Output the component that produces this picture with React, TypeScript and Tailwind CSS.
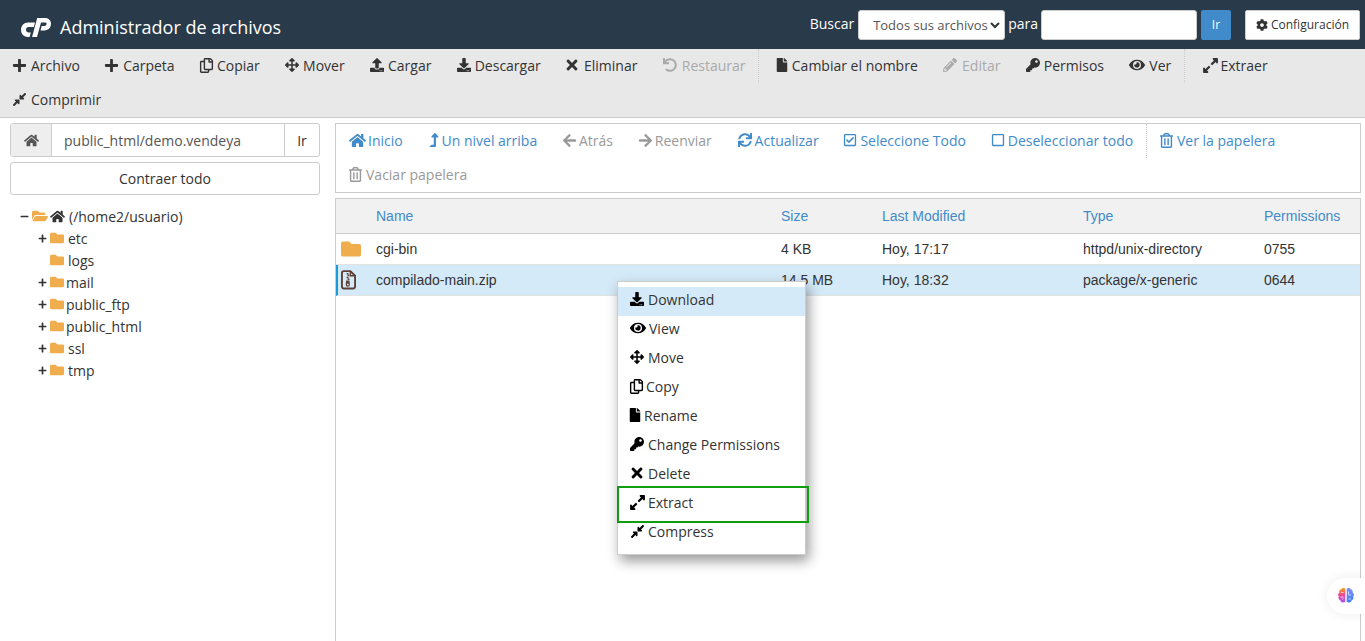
import React from "react";
import {
  FaPlus, FaRegCopy, FaArrowsAlt, FaUpload, FaDownload, FaTimes, FaUndo, FaFile, FaPencilAlt, FaKey, FaEye,
  FaExpandAlt, FaCompressAlt, FaHome, FaLevelUpAlt, FaArrowLeft, FaArrowRight, FaSync, FaRegCheckSquare,
  FaRegSquare, FaRegTrashAlt, FaCog, FaFolder, FaFolderOpen, FaMinus,
} from "react-icons/fa";

const sans = "font-['Open_Sans',sans-serif]";

function Logo() {
  return (
    <svg width="30" height="19" viewBox="0 0 30 19" className="shrink-0">
      <path fill="#fff" d="M14 4.500L12.800 9H7.800C6 9 5 10.200 5 11.800C5 13.400 6 14.600 7.800 14.600H9.800L8.600 19H7C3 19 0 16 0 11.800C0 7.600 3 4.500 7 4.500Z" />
      <path fill="#fff" d="M16.200 0H24C27.800 0 30 2.500 30 5.600C30 9.500 27.500 12.500 23.500 12.500H19.500L20.700 8H23.500C24.800 8 25.600 7 25.600 5.800C25.600 4.900 25 4.400 24 4.400H20L16 19H11.100Z" />
    </svg>
  );
}

function Brain() {
  return (
    <svg width="20" height="20" viewBox="0 0 20 20">
      <defs>
        <linearGradient id="brainL" x1="0" y1="0" x2="0" y2="1">
          <stop offset="0" stopColor="#f59e0b" />
          <stop offset="0.5" stopColor="#ec4899" />
          <stop offset="1" stopColor="#a855f7" />
        </linearGradient>
        <linearGradient id="brainR" x1="0" y1="0" x2="0" y2="1">
          <stop offset="0" stopColor="#818cf8" />
          <stop offset="1" stopColor="#3b82f6" />
        </linearGradient>
      </defs>
      <path fill="url(#brainL)" d="M9.300 2.500C8 1.500 6 1.800 5.400 3.300 3.800 3.500 3 5 3.400 6.400 2 7.300 1.600 9.300 2.800 10.500 2 12 2.700 14 4.400 14.400c.3 1.800 3 2.900 4.900 1.300z" />
      <path fill="url(#brainR)" d="M10.700 2.500c1.300-1 3.300-.7 3.900.8 1.600.2 2.400 1.700 2 3.100 1.400.9 1.800 2.900.6 4.100.8 1.500.1 3.500-1.600 3.900-.3 1.800-3 2.900-4.900 1.300z" />
      <g stroke="#fff" strokeWidth="0.7" fill="none">
        <path d="M5 6.500h2.500M4.500 11h3M6 13.500l1.500-1M12.500 5.500v3M15 9h-2.500M12.500 13h2.500" />
      </g>
    </svg>
  );
}

function ZipIcon() {
  return (
    <svg width="15" height="20" viewBox="0 0 16 21">
      <path fill="none" stroke="#5d4037" strokeWidth="2" strokeLinejoin="round" d="M3 1h7l5 5v11.500a2 2 0 0 1-2 2H3a2 2 0 0 1-2-2V3a2 2 0 0 1 2-2z" />
      <path fill="none" stroke="#5d4037" strokeWidth="1.500" d="M10 1v5h5" />
      <path fill="#5d4037" d="M6 3h2v1.500H6zM7 5h2v1.500H7zM6 7h2v1.500H6zM7 9h2v1.500H7zM5.500 11h3.500l.5 4.500a1.900 1.900 0 0 1-4.500 0z" />
      <circle cx="7.300" cy="15.300" r="0.9" fill="#fff" />
    </svg>
  );
}

type Tool = { icon: React.ReactNode; label: string; box: string; disabled?: boolean; sep?: boolean };

const tools: Tool[] = [
  { icon: <FaPlus size={15} />, label: "Archivo", box: "-ml-[1px] w-[19px]" },
  { icon: <FaPlus size={15} />, label: "Carpeta", box: "-ml-[1px] w-[19px]" },
  { icon: <FaRegCopy size={15} />, label: "Copiar", box: "-ml-[1px] w-[18px]" },
  { icon: <FaArrowsAlt size={14} />, label: "Mover", box: "w-[18px]" },
  { icon: <FaUpload size={14} />, label: "Cargar", box: "w-[18px]" },
  { icon: <FaDownload size={14} />, label: "Descargar", box: "w-[18px]" },
  { icon: <FaTimes size={16} />, label: "Eliminar", box: "-ml-[2px] w-[20px]" },
  { icon: <FaUndo size={14} />, label: "Restaurar", box: "w-[19px]", disabled: true, sep: true },
  { icon: <FaFile size={14} />, label: "Cambiar el nombre", box: "-ml-[2px] w-[17px]" },
  { icon: <FaPencilAlt size={14} />, label: "Editar", box: "w-[19px]", disabled: true },
  { icon: <FaKey size={14} />, label: "Permisos", box: "w-[18px]" },
  { icon: <FaEye size={16} />, label: "Ver", box: "w-[20px]", sep: true },
  { icon: <FaExpandAlt size={17} />, label: "Extraer", box: "-ml-[1px] w-[19px]" },
  { icon: <FaCompressAlt size={15} />, label: "Comprimir", box: "-ml-[1px] w-[19px]" },
];

type Nav = { icon: React.ReactNode; label: string; box: string; muted?: boolean; sep?: boolean };

const navs: Nav[] = [
  { icon: <FaHome size={17} />, label: "Inicio", box: "w-[19px]" },
  { icon: <FaLevelUpAlt size={14} />, label: "Un nivel arriba", box: "-ml-[2px] w-[15px]" },
  { icon: <FaArrowLeft size={15} />, label: "Atrás", box: "-ml-[1px] w-[17px]", muted: true },
  { icon: <FaArrowRight size={15} />, label: "Reenviar", box: "-ml-[1px] w-[17px]", muted: true },
  { icon: <FaSync size={14} />, label: "Actualizar", box: "w-[17px]" },
  { icon: <FaRegCheckSquare size={14} />, label: "Seleccione Todo", box: "-ml-[1px] w-[17px]" },
  { icon: <FaRegSquare size={14} />, label: "Deseleccionar todo", box: "-ml-[1px] w-[17px]", sep: true },
  { icon: <FaRegTrashAlt size={15} />, label: "Ver la papelera", box: "-ml-[1px] w-[18px]" },
  { icon: <FaRegTrashAlt size={15} />, label: "Vaciar papelera", box: "-ml-[1px] w-[18px]", muted: true },
];

const tree = [
  { label: "etc", plus: true, gap: "ml-[4px]" },
  { label: "logs", plus: false, gap: "ml-[4px]" },
  { label: "mail", plus: true, gap: "ml-[2px]" },
  { label: "public_ftp", plus: true, gap: "ml-[2px]" },
  { label: "public_html", plus: true, gap: "ml-[2px]" },
  { label: "ssl", plus: true, gap: "ml-[4px]" },
  { label: "tmp", plus: true, gap: "ml-[4px]" },
];

const menu: { icon: React.ReactNode; label: string; active?: boolean; box: string }[] = [
  { icon: <FaDownload size={14} />, label: "Download", active: true, box: "w-[18px]" },
  { icon: <FaEye size={16} />, label: "View", box: "w-[19px]" },
  { icon: <FaArrowsAlt size={14} />, label: "Move", box: "w-[18px]" },
  { icon: <FaRegCopy size={15} />, label: "Copy", box: "-ml-[1px] w-[17px]" },
  { icon: <FaFile size={14} />, label: "Rename", box: "-ml-[2px] w-[16px]" },
  { icon: <FaKey size={14} />, label: "Change Permissions", box: "w-[18px]" },
  { icon: <FaTimes size={16} />, label: "Delete", box: "-ml-[1px] w-[19px]" },
  { icon: <FaExpandAlt size={17} />, label: "Extract", box: "-ml-[1px] w-[19px]" },
  { icon: <FaCompressAlt size={15} />, label: "Compress", box: "w-[18px]" },
];

function Row({ icon, name, size, date, type, perm, selected }: { icon: React.ReactNode; name: string; size: string; date: string; type: string; perm: string; selected?: boolean }) {
  return (
    <div className={`flex h-[31px] items-center border-b border-[#e3e3e3] text-[14px] text-[#333] ${selected ? "bg-[#d5eaf8] border-l-[2px] border-l-[#1a9ad8] pl-[3px]" : "pl-[5px]"}`}>
      <div className="flex w-[35px] justify-start">{icon}</div>
      <div className="w-[405px]">{name}</div>
      <div className="w-[101px]">{size}</div>
      <div className="w-[201px]">{date}</div>
      <div className="w-[181px]">{type}</div>
      <div>{perm}</div>
    </div>
  );
}

export default function App() {
  return (
    <div className={`relative h-[641px] w-[1365px] overflow-hidden bg-white ${sans} text-[14px] text-[#333]`}>
      <header className="flex h-[49px] items-center bg-[#293a4a] pl-[21px] pr-[5px]">
        <div className="mt-[5px] flex items-center">
          <Logo />
          <h1 className="ml-[9px] text-[18px] text-white">Administrador de archivos</h1>
        </div>
        <div className="ml-auto flex items-center">
          <span className="pb-[2px] text-white">Buscar</span>
          <div className="relative ml-[4px]">
            <select className="h-[30px] w-[147px] appearance-none rounded-[3px] border border-[#ccc] bg-white pl-[14px] pt-[2px] text-[13px] text-[#555]">
              <option>Todos sus archivos</option>
            </select>
            <svg width="10" height="7" viewBox="0 0 10 7" className="pointer-events-none absolute right-[5px] top-[12px]">
              <path d="M1 1l4 4 4-4" fill="none" stroke="#333" strokeWidth="2" />
            </svg>
          </div>
          <span className="ml-[3px] pb-[2px] text-white">para</span>
          <input className="ml-[3px] h-[30px] w-[156px] rounded-[3px] border border-[#ccc] bg-white" />
          <button className="ml-[4px] h-[30px] w-[30px] rounded-[2px] bg-[#428bca] pt-[1px] text-[12px] text-white">Ir</button>
          <button className="ml-[14px] flex h-[30px] w-[115px] items-center justify-center gap-[3px] rounded-[2px] border border-[#ccc] bg-white pt-[1px] text-[12px] text-[#333]">
            <FaCog size={12} />
            Configuración
          </button>
        </div>
      </header>

      <nav className="flex h-[69px] flex-wrap content-start border-b border-[#ccc] bg-[#e8e8e8]">
        {tools.map((t) => (
          <div key={t.label} className={`flex h-[34px] items-center pb-[2px] pl-[13px] pr-[12.3px] ${t.disabled ? "text-[#aaa]" : "text-[#333]"} ${t.sep ? "mr-[5px] border-r border-dotted border-[#ccc]" : ""}`}>
            <span className={`flex shrink-0 items-center ${t.box}`}>{t.icon}</span>
            <span>{t.label}</span>
          </div>
        ))}
      </nav>

      <div className="flex">
        <aside className="ml-[10px] w-[310px] pt-[5px]">
          <div className="flex h-[34px] rounded-[3px] border border-[#ccc]">
            <div className="flex w-[41px] items-center justify-center border-r border-[#ccc] bg-[#eee] text-[#555]">
              <FaHome size={15} />
            </div>
            <div className="flex flex-1 items-center pl-[12px] text-[#555]">public_html/demo.vendeya</div>
            <div className="flex w-[35px] items-center justify-center border-l border-[#ccc] text-[#333]">Ir</div>
          </div>
          <div className="mt-[5px] flex h-[33px] items-center justify-center rounded-[3px] border border-[#ccc] text-[#333]">Contraer todo</div>
          <ul className="mt-[10px] pl-[10px]">
            <li className="flex h-[22px] items-center">
              <FaMinus size={9} className="text-[#333]" />
              <FaFolderOpen size={16} className="ml-[3px] text-[#f0ad4e]" />
              <FaHome size={15} className="ml-[2px] text-[#333]" />
              <span className="ml-[4px]">(/home2/usuario)</span>
            </li>
            {tree.map((n) => (
              <li key={n.label} className="flex h-[22px] items-center pl-[18px]">
                <span className="w-[9px]">{n.plus && <FaPlus size={9} className="text-[#333]" />}</span>
                <FaFolder size={14} className="ml-[3px] text-[#f0ad4e]" />
                <span className={n.gap}>{n.label}</span>
              </li>
            ))}
          </ul>
        </aside>

        <main className="ml-[15px] w-[1026px] pt-[5px]">
          <div className="flex h-[70px] flex-wrap content-start border border-[#ccc]">
            {navs.map((n) => (
              <div key={n.label} className={`flex h-[34px] items-center pb-[2px] pl-[13px] pr-[12.8px] ${n.muted ? "text-[#999]" : "text-[#428bca]"} ${n.sep ? "border-r border-dotted border-[#ccc]" : ""}`}>
                <span className={`flex shrink-0 items-center ${n.box}`}>{n.icon}</span>
                <span>{n.label}</span>
              </div>
            ))}
          </div>
          <div className="mt-[5px] h-[500px] border-x border-t border-[#ccc]">
            <div className="flex h-[35px] items-center border-b border-[#ccc] bg-[#f1f1f1] pl-[40px] font-['Liberation_Sans',sans-serif] text-[14px] text-[#428bca]">
              <div className="w-[405px]">Name</div>
              <div className="w-[101px]">Size</div>
              <div className="w-[201px]">Last Modified</div>
              <div className="w-[181px]">Type</div>
              <div>Permissions</div>
            </div>
            <div className="font-['Liberation_Sans',sans-serif]">
              <Row icon={<FaFolder size={20} className="text-[#f0ad4e]" />} name="cgi-bin" size="4 KB" date="Hoy, 17:17" type="httpd/unix-directory" perm="0755" />
              <Row icon={<ZipIcon />} name="compilado-main.zip" size="14.5 MB" date="Hoy, 18:32" type="package/x-generic" perm="0644" selected />
            </div>
          </div>
        </main>
      </div>

      <div className="absolute left-[617px] top-[281px] h-[274px] w-[189px] border border-[#ccc] bg-white pt-[5px] shadow-[3px_6px_12px_rgba(0,0,0,0.4)]">
        {menu.map((m) => (
          <div key={m.label} className={`flex h-[29px] items-center pb-[5px] pl-[12px] text-[#333] ${m.active ? "bg-[#d5eaf8]" : ""}`}>
            <span className={`flex shrink-0 items-center text-black ${m.box}`}>{m.icon}</span>
            <span>{m.label}</span>
          </div>
        ))}
      </div>
      <div className="absolute left-[617px] top-[486px] h-[37px] w-[192px] border-2 border-[#129c12]" />

      <div className="absolute left-[1327px] top-[578px] flex h-[36px] w-[38px] items-center justify-center rounded-l-[18px] bg-white shadow-[0_0_12px_rgba(0,0,0,0.08)]">
        <Brain />
      </div>
    </div>
  );
}
